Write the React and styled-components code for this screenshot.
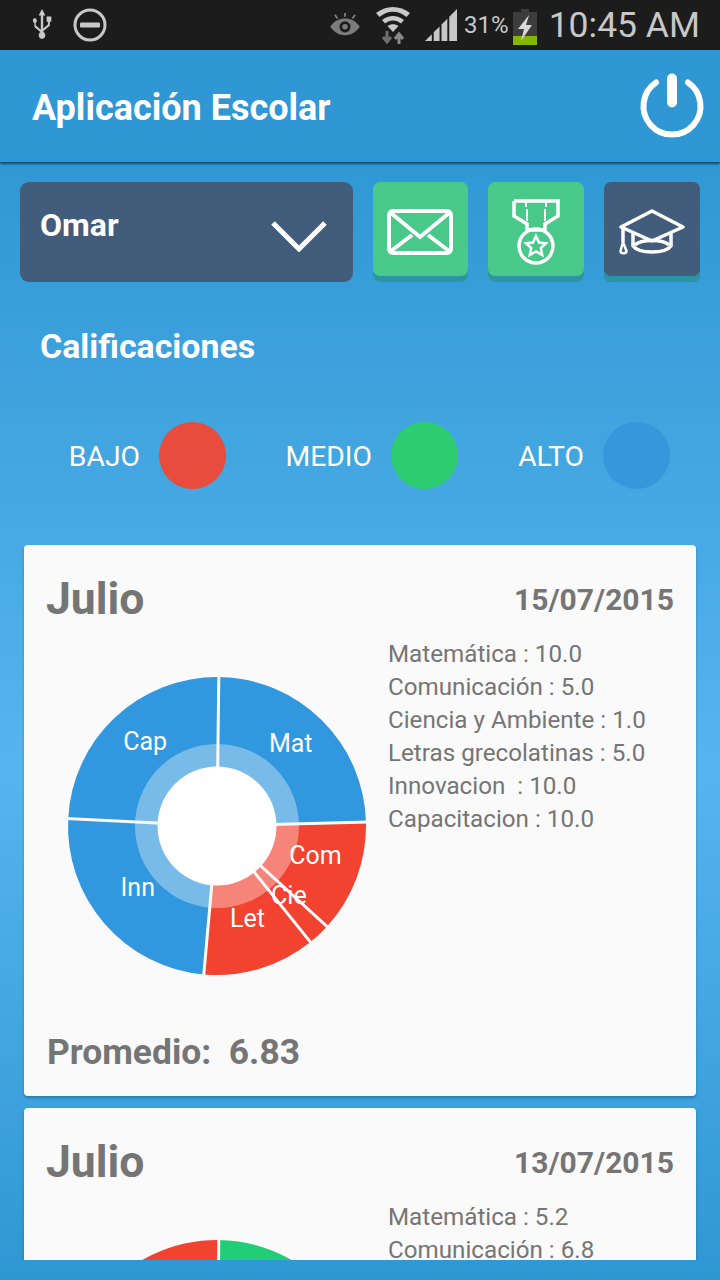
import React from 'react'
import styled, { createGlobalStyle } from 'styled-components'

const GlobalStyle = createGlobalStyle`
	html, body {
		margin: 0;
		padding: 0;
		background: #2f97d3;
	}
	* {
		box-sizing: border-box;
	}
`

const Screen = styled.div`
	width: 720px;
	height: 1280px;
	display: flex;
	flex-direction: column;
	overflow: hidden;
	font-family: Roboto, "Liberation Sans", sans-serif;
	background: linear-gradient(180deg, #2f97d3 0%, #2f97d3 12%, #56b5ee 60%, #2f97d3 100%);
`

const StatusBar = styled.div`
	height: 50px;
	flex: none;
	display: flex;
	align-items: center;
	padding: 0 20px 0 31px;
	background: #1c1c1c;
	color: #c8c8c8;
`

const StatusGroup = styled.div`
	display: flex;
	align-items: center;
	gap: ${p => p.gap}px;
`

const Spacer = styled.div`
	flex: 1;
`

const Percent = styled.span`
	font-size: 24px;
	margin-left: -8px;
	margin-right: -10px;
`

const Clock = styled.span`
	font-size: 35.5px;
	margin-left: -2px;
`

const AppBar = styled.header`
	height: 112px;
	flex: none;
	display: flex;
	align-items: center;
	justify-content: space-between;
	padding: 0 14px 0 32px;
	background: #2f97d3;
	box-shadow: 0 2px 2px rgba(10, 50, 80, 0.75);
	position: relative;
`

const AppTitle = styled.h1`
	margin: 4px 0 0;
	font-size: 36px;
	font-weight: 700;
	color: #fff;
`

const Content = styled.main`
	flex: 1;
	min-height: 0;
	display: flex;
	flex-direction: column;
	padding-top: 20px;
`

const Toolbar = styled.div`
	display: flex;
	padding: 0 20px;
	align-items: flex-start;
`

const Select = styled.div`
	width: 333px;
	height: 100px;
	margin-right: 20px;
	padding: 0 26px 14px 20px;
	display: flex;
	align-items: center;
	justify-content: space-between;
	border-radius: 9px;
	background: #425c7c;
	color: #fff;
	font-size: 32px;
	font-weight: 700;
`

const SquareButton = styled.button`
	width: 96px;
	height: 100px;
	margin-left: ${p => p.first ? 0 : 20}px;
	padding: 0;
	border: none;
	display: flex;
	align-items: center;
	justify-content: center;
	border-radius: 7px;
	background: ${p => p.dark ? '#425c7c' : '#48c98a'};
	box-shadow: inset 0 -6px 0 #2b95a4;
`

const SectionTitle = styled.h2`
	margin: 46px 0 0 40px;
	font-size: 33.9px;
	font-weight: 700;
	line-height: 38px;
	color: #fff;
`

const Legend = styled.div`
	display: flex;
	margin-top: 56px;
	height: 67px;
`

const LegendItem = styled.div`
	width: ${p => p.width}px;
	display: flex;
	justify-content: flex-end;
	align-items: center;
	gap: 19px;
	padding-top: 1px;
	font-size: 28.3px;
	color: #fff;
`

const Dot = styled.span`
	width: 67px;
	height: 67px;
	margin-top: -1px;
	border-radius: 50%;
	background: ${p => p.color};
`

const Viewport = styled.div`
	flex: 1;
	min-height: 0;
	margin: 56px 0 20px;
	padding: 0 24px;
	overflow: hidden;
`

const Card = styled.section`
	margin-bottom: 12px;
	padding: 27px 22px 0;
	height: 551px;
	border-radius: 4px;
	background: #fafafa;
	box-shadow: 0 2px 3px rgba(10, 50, 80, 0.35);
	color: #757575;
`

const CardHead = styled.div`
	display: flex;
	justify-content: space-between;
	align-items: center;
	height: 54px;
`

const Month = styled.div`
	font-size: 44.5px;
	font-weight: 700;
`

const CardDate = styled.div`
	font-size: 30px;
	font-weight: 700;
`

const CardBody = styled.div`
	display: flex;
	align-items: flex-start;
`

const ChartBox = styled.div`
	width: 342px;
	height: 340px;
	margin-top: 30px;
	flex: none;
`

const Scores = styled.ul`
	list-style: none;
	margin: 12px 0 0;
	padding: 0;
	font-size: 24.2px;
	line-height: 33px;
	white-space: pre;
`

const Average = styled.div`
	margin: 35px 0 0 1px;
	font-size: 35.4px;
	font-weight: 700;
	white-space: pre;
`

const ChevronIcon = styled.svg`
	margin-top: 22px;
`

const DndIcon = styled.svg`
	margin-left: 20px;
`

const BatteryIcon = styled.svg`
	margin-top: 3px;
`

const RED = '#f14330'
const GREEN = '#21cd75'
const BLUE = '#3197de'

const sliceColor = v => v <= 5 ? RED : v < 10 ? GREEN : BLUE

const point = (cx, cy, r, a) => [cx + r * Math.sin(a), cy - r * Math.cos(a)]

const Pie = ({slices}) => {
	const cx = 171, cy = 170
	const R = 149
	const total = slices.reduce((sum, s) => sum + s.value, 0)
	// the chart in the picture sits a hair clockwise of twelve o'clock
	let angle = 0.012
	const parts = slices.map(s => {
		const start = angle
		angle += s.value / total * Math.PI * 2
		return {...s, start, end: angle}
	})
	return (
		<svg width="342" height="340" viewBox="0 0 342 340">
			{parts.map((s, i) => {
				const [x1, y1] = point(cx, cy, R, s.start)
				const [x2, y2] = point(cx, cy, R, s.end)
				const large = s.end - s.start > Math.PI ? 1 : 0
				return <path key={i} fill={sliceColor(s.value)} d={`M${cx} ${cy}L${x1} ${y1}A${R} ${R} 0 ${large} 1 ${x2} ${y2}Z`}/>
			})}
			<circle cx={cx} cy={cy} r="82" fill="#fff" fillOpacity="0.35"/>
			{parts.map((s, i) => {
				const [x, y] = point(cx, cy, R + 2, s.start)
				return <line key={i} x1={cx} y1={cy} x2={x} y2={y} stroke="#fafafa" strokeWidth="3"/>
			})}
			<circle cx={cx} cy={cy} r="59.5" fill="#fff"/>
			{parts.filter(s => s.label).map(s => {
				const [x, y] = point(cx, cy, 105, (s.start + s.end) / 2)
				return <text key={s.label} x={x} y={y + 1} textAnchor="middle" fontSize="25" fill="#fff">{s.label}</text>
			})}
		</svg>
	)
}

const Usb = () => (
	<svg width="22" height="34" viewBox="0 0 26 36" fill="#c8c8c8" preserveAspectRatio="none">
		<path d="M13 1l4 7h-2.600v17.200a3.900 3.900 0 1 1-2.800 0V8H9z"/>
		<path d="M4 10.500a3 3 0 0 1 1.600 5.500v2.200l6.400 5v3l-8-6.200V16A3 3 0 0 1 4 10.500z"/>
		<path d="M18.500 9h5.500v5.500h-1.700v4.200L14 25v-3l6-4.600v-2.900h-1.500z"/>
	</svg>
)

const Dnd = () => (
	<DndIcon width="34" height="34" viewBox="0 0 34 34">
		<circle cx="17" cy="17" r="15" fill="none" stroke="#c8c8c8" strokeWidth="3"/>
		<rect x="7" y="14.500" width="20" height="5" rx="1" fill="#c8c8c8"/>
	</DndIcon>
)

const Eye = () => (
	<svg width="32" height="24" viewBox="0 0 34 26">
		<path d="M1 15C6 8 11 6 17 6s11 2 16 9c-5 7-10 9-16 9S6 22 1 15z" fill="#7c7c7c"/>
		<circle cx="17" cy="15" r="6" fill="#1c1c1c"/>
		<circle cx="17" cy="15" r="3" fill="#7c7c7c"/>
		<path d="M17 0v4M6 2l3 4M28 2l-3 4" stroke="#7c7c7c" strokeWidth="2"/>
	</svg>
)

const Wifi = () => (
	<svg width="36" height="38" viewBox="0 0 36 38" fill="none">
		<path d="M1 7C11-1 25-1 35 7l-3.500 4C23 4 13 4 4.500 11z" fill="#c8c8c8"/>
		<path d="M7 14c7-5.500 15-5.500 22 0l-3 3.500c-5-4-11-4-16 0z" fill="#c8c8c8"/>
		<path d="M12.500 20c3.500-2.500 7.500-2.500 11 0L18 26z" fill="#c8c8c8"/>
		<path d="M12 25v10M8 31l4 5 4-5" stroke="#6e6e6e" strokeWidth="3"/>
		<path d="M24 38V28M20 33l4-5 4 5" stroke="#8a8a8a" strokeWidth="3"/>
	</svg>
)

const Signal = () => (
	<svg width="33" height="33" viewBox="0 0 34 34" fill="#c8c8c8">
		<path d="M0 33l7-7v7zM9 33V24l6-6v15zM17 33V16l6-6v23zM25 33V8l8-8v33z"/>
	</svg>
)

const Battery = () => (
	<BatteryIcon width="24" height="36" viewBox="0 0 24 36">
		<path d="M8 0h8v3h8v33H0V3h8z" fill="#3d3d3d"/>
		<rect y="27" width="24" height="9" fill="#84b800"/>
		<path d="M16 6L5 20h6l-3 12 11-16h-6l3-10z" fill="#d8d8d8"/>
	</BatteryIcon>
)

const Power = () => (
	<svg width="68" height="74" viewBox="0 0 68 74" fill="none" stroke="#fff" strokeLinecap="round">
		<path d="M18 13.500A28.500 28.500 0 1 0 50 13.500" strokeWidth="6"/>
		<path d="M34 9.500v24" strokeWidth="10"/>
	</svg>
)

const Chevron = () => (
	<ChevronIcon width="56" height="32" viewBox="0 0 56 32" fill="none" stroke="#fff" strokeWidth="5">
		<path d="M2 3l26 26L54 3"/>
	</ChevronIcon>
)

const Mail = () => (
	<svg width="66" height="46" viewBox="0 0 66 46" fill="none" stroke="#fff" strokeWidth="4">
		<rect x="2" y="2" width="62" height="42" rx="4"/>
		<path d="M4 4l29 24L62 4M4 42l21-16M62 42L41 26"/>
	</svg>
)

const Medal = () => (
	<svg width="48" height="66" viewBox="0 0 48 66" fill="none" stroke="#fff" strokeWidth="3.500">
		<path d="M2 2h44v15l-13 8v6M2 2v15l13 8v6M15 31h18"/>
		<path d="M14 2v6M34 2v6M15 10v12M33 10v12" strokeWidth="2"/>
		<circle cx="24" cy="47" r="17"/>
		<path d="M24 37l3 6.500 7 .8-5.200 4.700 1.400 7L24 52.500 17.800 56l1.400-7L14 44.300l7-.8z" strokeWidth="2.500"/>
	</svg>
)

const GradCap = () => (
	<svg width="66" height="46" viewBox="0 0 66 46" fill="none" stroke="#fff" strokeWidth="3.500" strokeLinejoin="round">
		<path d="M33 2l31 16-31 14L2 18z"/>
		<path d="M14 24v13c6 8 32 8 38 0V24"/>
		<path d="M16 36c6-6 28-6 34 0"/>
		<path d="M4 19v14"/>
		<path d="M4 33l-2.500 9c0 3 6 3 6 0z" strokeWidth="2.500"/>
	</svg>
)

const firstCard = [
	{label: 'Mat', name: 'Matemática', value: 10},
	{label: 'Com', name: 'Comunicación', value: 5},
	{label: 'Cie', name: 'Ciencia y Ambiente', value: 1},
	{label: 'Let', name: 'Letras grecolatinas', value: 5},
	{label: 'Inn', name: 'Innovacion ', value: 10},
	{label: 'Cap', name: 'Capacitacion', value: 10},
]

const secondCard = [
	{name: 'Matemática', value: 5.2},
	{name: 'Comunicación', value: 6.8},
]

// only the top of the second chart shows, so it closes with a low slice
const secondSlices = [...secondCard, {value: 5}]

const formatScore = v => Number.isInteger(v) ? v.toFixed(1) : String(v)

const GradeCard = ({month, date, scores, slices, average}) => (
	<Card>
		<CardHead>
			<Month>{month}</Month>
			<CardDate>{date}</CardDate>
		</CardHead>
		<CardBody>
			<ChartBox><Pie slices={slices}/></ChartBox>
			<Scores>
				{scores.map(s => <li key={s.name}>{s.name} : {formatScore(s.value)}</li>)}
			</Scores>
		</CardBody>
		{average && <Average>Promedio:  {average}</Average>}
	</Card>
)

const App = () => (
	<Screen>
		<GlobalStyle/>
		<StatusBar>
			<StatusGroup gap={0}>
				<Usb/>
				<Dnd/>
			</StatusGroup>
			<Spacer/>
			<StatusGroup gap={14}>
				<Eye/>
				<Wifi/>
				<Signal/>
				<Percent>31%</Percent>
				<Battery/>
				<Clock>10:45 AM</Clock>
			</StatusGroup>
		</StatusBar>
		<AppBar>
			<AppTitle>Aplicación Escolar</AppTitle>
			<Power/>
		</AppBar>
		<Content>
			<Toolbar>
				<Select>
					Omar
					<Chevron/>
				</Select>
				<SquareButton first><Mail/></SquareButton>
				<SquareButton><Medal/></SquareButton>
				<SquareButton dark><GradCap/></SquareButton>
			</Toolbar>
			<SectionTitle>Calificaciones</SectionTitle>
			<Legend>
				<LegendItem width={226}>BAJO<Dot color="#e74c3c"/></LegendItem>
				<LegendItem width={232}>MEDIO<Dot color="#2ecc71"/></LegendItem>
				<LegendItem width={212}>ALTO<Dot color="#3498db"/></LegendItem>
			</Legend>
			<Viewport>
				<GradeCard month="Julio" date="15/07/2015" scores={firstCard} slices={firstCard} average="6.83"/>
				<GradeCard month="Julio" date="13/07/2015" scores={secondCard} slices={secondSlices}/>
			</Viewport>
		</Content>
	</Screen>
)

export default App
